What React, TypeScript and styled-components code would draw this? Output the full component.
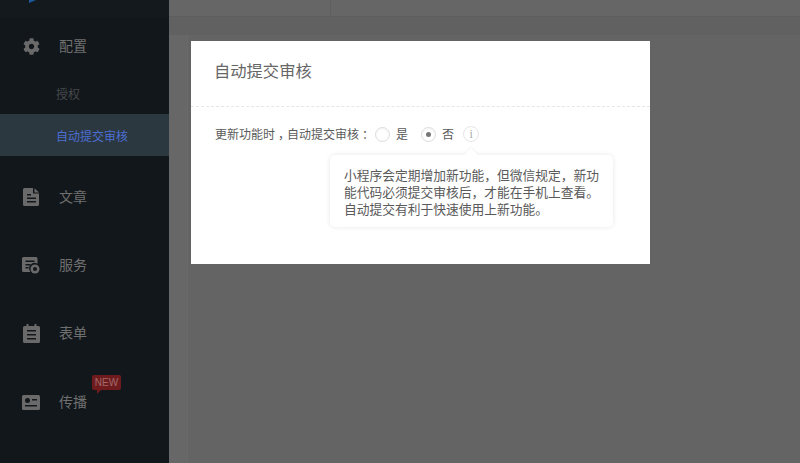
import styled, { createGlobalStyle } from "styled-components";
import { FaCog } from "react-icons/fa";

const SIDEBAR_BG = "#12171b";

const GlobalStyle = createGlobalStyle`
  html, body {
    margin: 0;
    padding: 0;
    height: 100%;
    overflow: hidden;
    background: #666;
    font-family: "Noto Sans CJK SC", "Liberation Sans", sans-serif;
  }
  #root {
    height: 100%;
  }
`;

const Page = styled.div`
  position: relative;
  display: flex;
  width: 800px;
  height: 463px;
  overflow: hidden;
`;

const Sidebar = styled.aside`
  flex: 0 0 169px;
  display: flex;
  flex-direction: column;
  background: ${SIDEBAR_BG};
`;

const Brand = styled.div`
  height: 17px;
  background: #14191d;
  padding-left: 29px;
  box-sizing: border-box;
`;

const Logo = styled.div`
  width: 0;
  height: 0;
  border-top: 3px solid #1c5a9c;
  border-right: 7px solid transparent;
`;

const NavGroup = styled.div`
  display: flex;
  flex-direction: column;
  padding-top: 10px;
`;

const NavItem = styled.div<{ $gap?: number }>`
  position: relative;
  display: flex;
  align-items: center;
  gap: 19px;
  height: 36px;
  padding-left: 22px;
  margin-top: ${(p) => p.$gap ?? 0}px;
  color: #6f6f6f;
  font-size: 14px;
`;

const IconBox = styled.span`
  display: flex;
  justify-content: center;
  width: 18px;
  margin-top: 2px;
  color: #6a6a6a;
  font-size: 17px;
`;

const SubMenu = styled.div`
  padding-top: 9px;
`;

const SubItem = styled.div<{ $active?: boolean }>`
  display: flex;
  align-items: center;
  height: 42px;
  padding-left: 56px;
  font-size: 12px;
  color: ${(p) => (p.$active ? "#4b6ed2" : "#46494b")};
  background: ${(p) => (p.$active ? "#2c3840" : "transparent")};
`;

const NewBadge = styled.span`
  position: absolute;
  left: 92px;
  top: -8px;
  width: 29px;
  height: 15px;
  border-radius: 2px;
  background: #6f1b1e;
  color: #a06a6a;
  font-size: 10px;
  line-height: 15px;
  text-align: center;
  font-family: "Liberation Sans", sans-serif;

  &::after {
    content: "";
    position: absolute;
    left: 5px;
    bottom: -4px;
    border-top: 4px solid #6f1b1e;
    border-right: 4px solid transparent;
  }
`;

const Main = styled.main`
  flex: 1;
  display: flex;
  flex-direction: column;
`;

const TopBar = styled.div`
  display: flex;
  height: 17px;
  box-sizing: border-box;
  border-bottom: 1px solid #5d5d5d;
  background: #666;
`;

const TopCell = styled.div`
  width: 161px;
  border-right: 1px solid #5f5f5f;
`;

const Band = styled.div`
  height: 18px;
  background: #616161;
`;

const Workspace = styled.div`
  flex: 1;
  display: flex;
  background: #676767;
`;

const Content = styled.div`
  flex: 1;
  margin-left: 18px;
  background: #646464;
  border-left: 1px solid #6a6a6a;
`;

const Modal = styled.section`
  position: absolute;
  left: 191px;
  top: 41px;
  width: 459px;
  height: 223px;
  background: #fff;
`;

const ModalHeader = styled.header`
  height: 66px;
  box-sizing: border-box;
  padding: 0 23px 8px;
  display: flex;
  align-items: center;
  border-bottom: 1px dashed #e6e6e6;
  color: #666;
  font-size: 16.3px;
`;

const ModalBody = styled.div`
  display: flex;
  align-items: center;
  padding: 19px 24px 0;
  font-size: 12px;
  color: #5a5a5a;
  line-height: 17px;
`;

const Label = styled.span`
  margin: -2px 4px 0 0;
`;

/* half-width mark with equal margins, so it sits centred in its cell */
const Punct = styled.span`
  font-feature-settings: "halt";
  margin: 0 0.25em;
`;

const Radio = styled.span<{ $checked?: boolean }>`
  display: inline-flex;
  align-items: center;
  justify-content: center;
  width: 15px;
  height: 15px;
  box-sizing: border-box;
  border: 1px solid #dcdcdc;
  border-radius: 50%;
  margin-right: 6px;
  box-shadow: inset 0 1px 2px rgba(0, 0, 0, 0.05);

  &::after {
    content: "";
    display: ${(p) => (p.$checked ? "block" : "none")};
    width: 5px;
    height: 5px;
    border-radius: 50%;
    background: #777;
  }
`;

const RadioText = styled.span`
  margin: -2px 13px 0 0;
`;

const InfoWrap = styled.span`
  position: relative;
  margin-left: -4px;
`;

const InfoIcon = styled.span`
  display: flex;
  align-items: center;
  justify-content: center;
  width: 16px;
  height: 16px;
  box-sizing: border-box;
  border: 1px solid #e6e6e6;
  border-radius: 50%;
  font-family: "Liberation Serif", serif;
  font-size: 12px;
  color: #aaa;
`;

const Tooltip = styled.div`
  position: absolute;
  left: -133px;
  top: 29px;
  width: 283px;
  height: 72px;
  box-sizing: border-box;
  padding: 11px 13px 0 14px;
  background: #fff;
  border-radius: 5px;
  box-shadow: 0 0 5px rgba(0, 0, 0, 0.1);
  font-size: 12.75px;
  line-height: 17px;
  color: #5a5a5a;

  &::before {
    content: "";
    position: absolute;
    left: 136px;
    top: -5px;
    width: 10px;
    height: 10px;
    background: #fff;
    transform: rotate(45deg);
    box-shadow: -1px -1px 2px rgba(0, 0, 0, 0.04);
  }
`;

const TooltipText = styled.p`
  position: relative;
  margin: 0;
`;

const FileIcon = () => (
  <svg width="17" height="18" viewBox="0 0 17 18">
    <path
      fill="currentColor"
      d="M1.5 0H10v5.5h6V16.5A1.5 1.5 0 0 1 14.500 18h-13A1.500 1.500 0 0 1 0 16.500v-15A1.500 1.500 0 0 1 1.500 0z"
    />
    <path fill="currentColor" d="M11.500 0.300 16 4.500h-4.500z" />
    <path fill={SIDEBAR_BG} d="M4 6h4v1.500H4zM4 9.500h9V11H4zM4 13h9v1.500H4z" />
  </svg>
);

const ServiceIcon = () => (
  <svg width="18" height="18" viewBox="0 0 18 18">
    <path
      fill="currentColor"
      d="M1.500 1H14a1.500 1.500 0 0 1 1.500 1.500v5.200a5.500 5.500 0 0 0-7 8.300h-7A1.500 1.500 0 0 1 0 14.500v-12A1.500 1.500 0 0 1 1.500 1z"
    />
    <path fill={SIDEBAR_BG} d="M3.500 4.500h9V6h-9zM3.500 8h5v1.500h-5zM3.500 11h3v1.500h-3z" />
    <circle cx="13" cy="13" r="4.500" fill="currentColor" />
    <circle cx="13" cy="13" r="2" fill={SIDEBAR_BG} />
  </svg>
);

const ClipboardIcon = () => (
  <svg width="17" height="19" viewBox="0 0 17 19">
    <path
      fill="currentColor"
      d="M1.500 2H3.500V0H5.500V2H11.500V0H13.500V2H15.500A1.500 1.500 0 0 1 17 3.500v14a1.500 1.500 0 0 1-1.500 1.500h-14A1.500 1.500 0 0 1 0 17.500v-14A1.500 1.500 0 0 1 1.500 2z"
    />
    <path fill={SIDEBAR_BG} d="M4 6h9v1.500H4zM4 10h9v1.500H4zM4 14h9v1.500H4z" />
  </svg>
);

const CardIcon = () => (
  <svg width="18" height="15" viewBox="0 0 18 15">
    <rect width="18" height="15" rx="1.500" fill="currentColor" />
    <circle cx="5.500" cy="5.500" r="2.500" fill={SIDEBAR_BG} />
    <path fill={SIDEBAR_BG} d="M10 4h5v1.500h-5zM3 10h12v1.500H3z" />
  </svg>
);

export default function App() {
  return (
    <Page>
      <GlobalStyle />
      <Sidebar>
        <Brand>
          <Logo />
        </Brand>
        <NavGroup>
          <NavItem>
            <IconBox>
              <FaCog />
            </IconBox>
            配置
          </NavItem>
          <SubMenu>
            <SubItem>授权</SubItem>
            <SubItem $active>自动提交审核</SubItem>
          </SubMenu>
          <NavItem $gap={22}>
            <IconBox>
              <FileIcon />
            </IconBox>
            文章
          </NavItem>
          <NavItem $gap={32}>
            <IconBox>
              <ServiceIcon />
            </IconBox>
            服务
          </NavItem>
          <NavItem $gap={32}>
            <IconBox>
              <ClipboardIcon />
            </IconBox>
            表单
          </NavItem>
          <NavItem $gap={33}>
            <IconBox>
              <CardIcon />
            </IconBox>
            传播
            <NewBadge>NEW</NewBadge>
          </NavItem>
        </NavGroup>
      </Sidebar>
      <Main>
        <TopBar>
          <TopCell />
        </TopBar>
        <Band />
        <Workspace>
          <Content />
        </Workspace>
      </Main>
      <Modal>
        <ModalHeader>自动提交审核</ModalHeader>
        <ModalBody>
          <Label>
            更新功能时<Punct>，</Punct>自动提交审核<Punct>：</Punct>
          </Label>
          <Radio />
          <RadioText>是</RadioText>
          <Radio $checked />
          <RadioText>否</RadioText>
          <InfoWrap>
            <InfoIcon>i</InfoIcon>
            <Tooltip>
              <TooltipText>
                小程序会定期增加新功能，但微信规定，新功能代码必须提交审核后，才能在手机上查看。自动提交有利于快速使用上新功能。
              </TooltipText>
            </Tooltip>
          </InfoWrap>
        </ModalBody>
      </Modal>
    </Page>
  );
}
